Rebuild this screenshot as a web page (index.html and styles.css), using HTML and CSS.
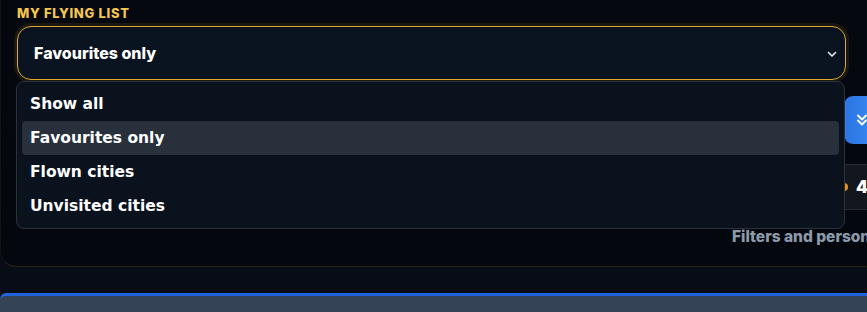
FILE: index.html
```html
<!DOCTYPE html>
<html lang="en">
<head>
    <meta charset="UTF-8">
    <meta name="viewport" content="width=device-width, initial-scale=1.0">
    <title>My flying list</title>
    <link rel="stylesheet" href="styles.css">
</head>
<body>
    <div class="panel">
        <div class="field">
            <label class="field-label" for="list-filter">My flying list</label>
            <div class="select" id="list-filter">
                <span>Favourites only</span>
                <svg class="chevron" width="10" height="7" viewBox="0 0 10 7">
                    <path d="M1.5 1.5 L5 5 L8.5 1.5" fill="none" stroke="#e6ebf2" stroke-width="1.6" stroke-linecap="round" stroke-linejoin="round"/>
                </svg>
            </div>
            <ul class="menu">
                <li>Show all</li>
                <li class="active">Favourites only</li>
                <li>Flown cities</li>
                <li>Unvisited cities</li>
            </ul>
        </div>

        <div class="toolbar">
            <input type="text" class="search">
            <button class="expand-btn" title="More">
                <svg width="14" height="14" viewBox="0 0 14 14">
                    <path d="M3 2.5 L7 6.5 L11 2.5 M3 7.5 L7 11.5 L11 7.5" fill="none" stroke="#fff" stroke-width="1.8" stroke-linecap="round" stroke-linejoin="round"/>
                </svg>
            </button>
        </div>

        <div class="stats">
            <div class="stats-summary"></div>
            <div class="stat-item"><span class="dot"></span><b>4</b></div>
        </div>

        <div class="hint">Filters and personalisation</div>
    </div>

    <div class="footer"></div>
</body>
</html>
```
FILE: styles.css
```css
body, html {
    margin: 0;
    padding: 0;
    height: 100%;
    overflow: hidden;
    background-color: #070c16;
    font-family: Inter, "Noto Sans", sans-serif;
}
.panel {
    width: 1100px;
    padding: 5px 0 19px 16px;
    background: linear-gradient(180deg, #05080f 0%, #04070d 100%);
    border: 1px solid #2a2416;
    border-top: none;
    border-left-color: #111418;
    border-radius: 0 0 0 16px;
    box-sizing: border-box;
}
.field {
    position: relative;
    width: 829px;
}
.field-label {
    display: block;
    color: #f5c650;
    font-size: 13px;
    font-weight: 800;
    line-height: 17px;
    letter-spacing: 0.7px;
    text-transform: uppercase;
    margin-bottom: 4px;
}
.select {
    display: flex;
    align-items: center;
    justify-content: space-between;
    height: 54px;
    box-sizing: border-box;
    padding: 0 8px 0 16px;
    background-color: #0a1320;
    border: 1px solid #e0a72b;
    border-radius: 14px;
    box-shadow: 0 0 0 3px rgba(224, 167, 43, 0.1);
    color: #ffffff;
    font-size: 16px;
    font-weight: 800;
}
.chevron {
    margin-top: 2px;
}
.menu {
    position: absolute;
    top: 76px;
    left: -1px;
    width: 829px;
    box-sizing: border-box;
    margin: 0;
    padding: 5px;
    list-style: none;
    background-color: #0a121e;
    border: 1px solid #2b323b;
    border-radius: 8px;
    z-index: 2;
}
.menu li {
    height: 34px;
    line-height: 34px;
    padding-left: 8px;
    border-radius: 4px;
    color: #ffffff;
    font-family: "DejaVu Sans", sans-serif;
    font-size: 15.5px;
    font-weight: 700;
}
.menu li.active {
    background-color: #27303b;
}
.toolbar {
    display: flex;
    gap: 12px;
    margin-top: 16px;
}
.search {
    width: 815px;
    height: 48px;
    box-sizing: border-box;
    background-color: #0a1320;
    border: 1px solid #2b323b;
    border-radius: 10px;
    padding: 0 14px;
}
.expand-btn {
    width: 36px;
    height: 48px;
    padding: 0;
    border: none;
    border-radius: 9px;
    background: linear-gradient(90deg, #2a76e4, #3b8af2);
    display: flex;
    align-items: center;
    justify-content: center;
    cursor: pointer;
}
.stats {
    display: flex;
    align-items: center;
    height: 46px;
    margin-top: 20px;
    box-sizing: border-box;
    background-color: #13161d;
    border-top: 1px solid #262b33;
    border-bottom: 1px solid #262b33;
}
.stats-summary {
    flex: 0 0 823px;
}
.stat-item {
    display: flex;
    align-items: center;
    gap: 8px;
    color: #ffffff;
    font-size: 17px;
    font-weight: 800;
}
.dot {
    width: 8px;
    height: 8px;
    border-radius: 50%;
    background-color: #e8901c;
}
.hint {
    margin: 17px 0 0 715px;
    color: #8d9aab;
    font-size: 15.5px;
    font-weight: 800;
    letter-spacing: 0;
    line-height: 20px;
}
.footer {
    height: 100px;
    margin-top: 26px;
    background-color: #354356;
    border-top: 3px solid #2263dd;
    border-radius: 6px 0 0 0;
}
```
